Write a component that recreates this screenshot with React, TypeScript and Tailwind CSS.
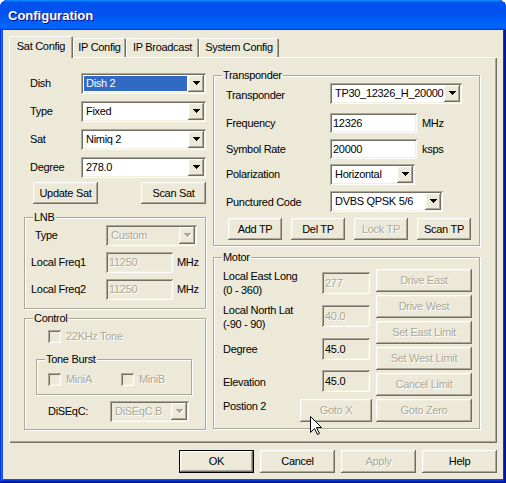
import React from "react";

const RAISED =
  "shadow-[inset_-1px_-1px_#716F64,inset_1px_1px_#FFFFFF,inset_-2px_-2px_#ACA899,inset_2px_2px_#F1EFE2]";
const SUNKEN =
  "shadow-[inset_1px_1px_#ACA899,inset_-1px_-1px_#FFFFFF,inset_2px_2px_#716F64,inset_-2px_-2px_#F1EFE2]";
const DIS = "text-[#ACA899] [text-shadow:1px_1px_0_#FFFFFF]";

type P = { className?: string; children?: React.ReactNode; disabled?: boolean };

function Btn({ className = "", children, disabled = false }: P) {
  return (
    <div
      className={`flex items-center justify-center bg-[#ECE9D8] whitespace-nowrap ${RAISED} ${
        disabled ? DIS : "text-black"
      } ${className}`}
    >
      {children}
    </div>
  );
}

function Arrow({ disabled = false }: { disabled?: boolean }) {
  const c = disabled ? "#ACA899" : "#000000";
  return (
    <svg width="8" height="5" viewBox="0 0 8 5" shapeRendering="crispEdges" className="block">
      {disabled && (
        <g fill="#FFFFFF">
          <rect x="1" y="1" width="7" height="1" />
          <rect x="2" y="2" width="5" height="1" />
          <rect x="3" y="3" width="3" height="1" />
          <rect x="4" y="4" width="1" height="1" />
        </g>
      )}
      <g fill={c}>
        <rect x="0" y="0" width="7" height="1" />
        <rect x="1" y="1" width="5" height="1" />
        <rect x="2" y="2" width="3" height="1" />
        <rect x="3" y="3" width="1" height="1" />
      </g>
    </svg>
  );
}

function Combo({
  className = "",
  value,
  disabled = false,
  selected = false,
}: {
  className?: string;
  value: string;
  disabled?: boolean;
  selected?: boolean;
}) {
  return (
    <div className={`flex p-[2px] ${disabled ? "bg-[#ECE9D8]" : "bg-white"} ${SUNKEN} ${className}`}>
      <div className="flex-1 min-w-0 overflow-hidden whitespace-nowrap flex p-[1px]">
        <div
          className={`h-full w-full flex items-center pl-[2px] ${
            selected ? "bg-[#316AC5] text-white" : disabled ? DIS : ""
          }`}
        >
          {value}
        </div>
      </div>
      <div className={`w-[16px] shrink-0 flex items-center justify-center pl-[1px] bg-[#ECE9D8] ${RAISED}`}>
        <Arrow disabled={disabled} />
      </div>
    </div>
  );
}

function Field({
  className = "",
  value,
  white = false,
  disabled = false,
}: {
  className?: string;
  value: string;
  white?: boolean;
  disabled?: boolean;
}) {
  return (
    <div
      className={`flex items-center pl-[3px] ${white ? "bg-white" : "bg-[#ECE9D8]"} ${SUNKEN} ${
        disabled ? DIS : ""
      } ${className}`}
    >
      {value}
    </div>
  );
}

function Check({ label, className = "" }: { label: string; className?: string }) {
  return (
    <div className={`flex items-center h-[13px] ${className}`}>
      <div className={`w-[13px] h-[13px] shrink-0 bg-[#ECE9D8] ${SUNKEN}`} />
      <span className={`ml-[5px] ${DIS}`}>{label}</span>
    </div>
  );
}

function Group({ label, className = "", children }: { label: string; className?: string; children?: React.ReactNode }) {
  return (
    <div className={`relative border border-[#ACA899] shadow-[inset_1px_1px_#FFFFFF,1px_1px_#FFFFFF] ${className}`}>
      <span className="absolute top-[-7px] left-[8px] px-[1px] bg-[#ECE9D8] leading-[13px] whitespace-nowrap">
        {label}
      </span>
      {children}
    </div>
  );
}

const TAB = "shadow-[inset_1px_1px_#FFFFFF,inset_-1px_0_#716F64,inset_-2px_0_#ACA899]";

export default function App() {
  return (
    <div className="w-[506px] h-[483px] bg-white font-['Liberation_Sans',Arial,sans-serif] text-[11px] tracking-[-0.3px] text-black relative overflow-hidden select-none">
      <div className="h-[483px] flex flex-col rounded-t-[8px] overflow-hidden bg-[#0055EA] shadow-[inset_-1px_-1px_#00138C,inset_1px_1px_#0831D9,inset_-2px_-2px_#001EA0,inset_2px_2px_#166AEE,inset_-3px_-3px_#003BDA,inset_3px_3px_#0855DD]">
        {/* Title bar */}
        <div className="h-[30px] shrink-0 flex items-center pl-[8px] pt-[1px] bg-[linear-gradient(180deg,#0997FF_0%,#0053EE_8%,#0050EE_40%,#0066FF_88%,#0066FF_93%,#005BFF_95%,#003DD7_96%,#003DD7_100%)]">
          <span className="text-white font-bold text-[13px] tracking-normal [text-shadow:1px_1px_#0F1089]">
            Configuration
          </span>
        </div>

        {/* Client */}
        <div className="h-[449px] mx-[3px] bg-[#ECE9D8] flex flex-col px-[6px] pt-[6px]">
          {/* Tabs */}
          <div className="flex items-end h-[21px] relative z-10">
            <div className={`h-[22px] w-[64px] -mb-[1px] bg-[#ECE9D8] rounded-t-[2px] ${TAB} flex items-center justify-center pb-[2px]`}>
              Sat Config
            </div>
            <div className={`h-[19px] w-[53px] rounded-t-[2px] ${TAB} flex items-center justify-center`}>IP Config</div>
            <div className={`h-[19px] w-[73px] rounded-t-[2px] ${TAB} flex items-center justify-center`}>IP Broadcast</div>
            <div className={`h-[19px] w-[80px] rounded-t-[2px] ${TAB} flex items-center justify-center`}>System Config</div>
          </div>

          {/* Panel */}
          <div className="h-[386px] bg-[#ECE9D8] shadow-[inset_1px_1px_#FFFFFF,inset_-1px_-1px_#716F64,inset_-2px_-2px_#ACA899] flex pl-[15px] pr-[17px]">
            {/* Left column */}
            <div className="w-[182px] shrink-0 flex flex-col pt-[16px]">
              <div className="flex flex-col gap-[7px]">
                <div className="flex items-center h-[21px]">
                  <span className="w-[57px] pl-[6px]">Dish</span>
                  <Combo className="w-[125px] h-[21px]" value="Dish 2" selected />
                </div>
                <div className="flex items-center h-[21px]">
                  <span className="w-[57px] pl-[6px]">Type</span>
                  <Combo className="w-[125px] h-[21px]" value="Fixed" />
                </div>
                <div className="flex items-center h-[21px]">
                  <span className="w-[57px] pl-[6px]">Sat</span>
                  <Combo className="w-[125px] h-[21px]" value="Nimiq 2" />
                </div>
                <div className="flex items-center h-[21px]">
                  <span className="w-[57px] pl-[6px]">Degree</span>
                  <Combo className="w-[125px] h-[21px]" value="278.0" />
                </div>
              </div>
              <div className="flex justify-between pl-[9px] mt-[4px]">
                <Btn className="w-[65px] h-[22px]">Update Sat</Btn>
                <Btn className="w-[65px] h-[22px]">Scan Sat</Btn>
              </div>

              <Group label="LNB" className="mt-[13px] h-[92px] pt-[7px] flex flex-col gap-[6px]">
                <div className="flex items-center h-[21px]">
                  <span className="w-[81px] pl-[10px]">Type</span>
                  <Combo className="w-[91px] h-[21px]" value="Custom" disabled />
                </div>
                <div className="flex items-center h-[21px]">
                  <span className="w-[81px] pl-[6px]">Local Freq1</span>
                  <Field className="w-[67px] h-[21px]" value="11250" disabled />
                  <span className="ml-[4px]">MHz</span>
                </div>
                <div className="flex items-center h-[21px]">
                  <span className="w-[81px] pl-[6px]">Local Freq2</span>
                  <Field className="w-[67px] h-[21px]" value="11250" disabled />
                  <span className="ml-[4px]">MHz</span>
                </div>
              </Group>

              <Group label="Control" className="mt-[9px] h-[112px] pt-[11px] flex flex-col">
                <Check label="22KHz Tone" className="pl-[23px]" />
                <Group label="Tone Burst" className="mt-[16px] ml-[11px] mr-[13px] h-[36px] pt-[13px]">
                  <div className="flex pl-[11px]">
                    <Check label="MiniA" className="w-[73px]" />
                    <Check label="MiniB" />
                  </div>
                </Group>
                <div className="flex items-center h-[21px] mt-[6px] pl-[23px]">
                  <span className="w-[62px]">DiSEqC:</span>
                  <Combo className="w-[79px] h-[21px]" value="DiSEqC B" disabled />
                </div>
              </Group>
            </div>

            {/* Right column */}
            <div className="w-[267px] shrink-0 ml-[7px] flex flex-col">
              <Group label="Transponder" className="mt-[18px] h-[171px] pt-[7px] flex flex-col">
                <div className="flex items-center h-[21px]">
                  <span className="w-[116px] pl-[12px] pt-[3px]">Transponder</span>
                  <Combo className="w-[132px] h-[21px]" value="TP30_12326_H_20000" />
                </div>
                <div className="flex items-center h-[20px] mt-[9px]">
                  <span className="w-[116px] pl-[12px]">Frequency</span>
                  <Field className="w-[87px] h-[20px]" value="12326" white />
                  <span className="ml-[5px]">MHz</span>
                </div>
                <div className="flex items-center h-[20px] mt-[6px]">
                  <span className="w-[116px] pl-[12px]">Symbol Rate</span>
                  <Field className="w-[87px] h-[20px]" value="20000" white />
                  <span className="ml-[5px]">ksps</span>
                </div>
                <div className="flex items-center h-[21px] mt-[5px]">
                  <span className="w-[116px] pl-[12px]">Polarization</span>
                  <Combo className="w-[85px] h-[21px]" value="Horizontal" />
                </div>
                <div className="flex items-center h-[21px] mt-[6px]">
                  <span className="w-[116px] pl-[12px] pt-[2px]">Punctured Code</span>
                  <Combo className="w-[113px] h-[21px]" value="DVBS QPSK 5/6" />
                </div>
                <div className="flex gap-[9px] pl-[14px] mt-[6px]">
                  <Btn className="w-[54px] h-[22px]">Add TP</Btn>
                  <Btn className="w-[54px] h-[22px]">Del TP</Btn>
                  <Btn className="w-[54px] h-[22px]" disabled>
                    Lock TP
                  </Btn>
                  <Btn className="w-[54px] h-[22px]">Scan TP</Btn>
                </div>
              </Group>

              <Group label="Motor" className="mt-[11px] h-[172px] flex pl-[9px] pr-[7px]">
                <div className="w-[150px] flex flex-col">
                  <div className="flex items-start h-[22px] mt-[14px] mr-[3px]">
                    <span className="flex-1 leading-[14px] -mt-[3px]">
                      Local East Long
                      <br />
                      (0 - 360)
                    </span>
                    <Field className="w-[48px] h-[22px] items-start pt-[3px]" value="277" disabled />
                  </div>
                  <div className="flex items-start h-[22px] mt-[11px] mr-[3px]">
                    <span className="flex-1 leading-[14px] -mt-[2px]">
                      Local North Lat
                      <br />
                      (-90 - 90)
                    </span>
                    <Field className="w-[48px] h-[22px] items-start pt-[3px]" value="40.0" disabled />
                  </div>
                  <div className="flex items-center h-[22px] mt-[11px] mr-[3px]">
                    <span className="flex-1">Degree</span>
                    <Field className="w-[48px] h-[22px] items-start pt-[3px]" value="45.0" />
                  </div>
                  <div className="flex items-center h-[22px] mt-[10px] mr-[3px]">
                    <span className="flex-1 pt-[2px]">Elevation</span>
                    <Field className="w-[48px] h-[22px] items-start pt-[3px]" value="45.0" />
                  </div>
                  <div className="flex items-start h-[23px] mt-[7px] mr-[1px]">
                    <span className="flex-1 leading-[14px]">Postion 2</span>
                    <Btn className="w-[72px] h-[23px]" disabled>
                      Goto X
                    </Btn>
                  </div>
                </div>
                <div className="w-[96px] ml-[3px] pt-[11px] flex flex-col gap-[3px]">
                  <Btn className="h-[23px]" disabled>Drive East</Btn>
                  <Btn className="h-[23px]" disabled>Drive West</Btn>
                  <Btn className="h-[23px]" disabled>Set East Limit</Btn>
                  <Btn className="h-[23px]" disabled>Set West Limit</Btn>
                  <Btn className="h-[23px]" disabled>Cancel Limit</Btn>
                  <Btn className="h-[23px]" disabled>Goto Zero</Btn>
                </div>
              </Group>
            </div>
          </div>

          {/* Bottom buttons */}
          <div className="flex justify-end gap-[6px] mt-[7px]">
            <div className="w-[75px] h-[23px] border border-black flex">
              <Btn className="flex-1">OK</Btn>
            </div>
            <Btn className="w-[75px] h-[23px]">Cancel</Btn>
            <Btn className="w-[75px] h-[23px]" disabled>
              Apply
            </Btn>
            <Btn className="w-[75px] h-[23px]">Help</Btn>
          </div>
        </div>
      </div>

      {/* Mouse cursor */}
      <svg
        className="absolute left-[310px] top-[416px]"
        width="13"
        height="20"
        viewBox="0 0 13 20"
        shapeRendering="crispEdges"
      >
        <path
          d="M0.5 0.5 L0.5 16.5 L4.5 12.5 L7.5 18.5 L9.5 17.5 L6.5 11.5 L11.5 11.5 Z"
          fill="#FFFFFF"
          stroke="#000000"
          strokeWidth="1"
          shapeRendering="geometricPrecision"
        />
      </svg>
    </div>
  );
}
